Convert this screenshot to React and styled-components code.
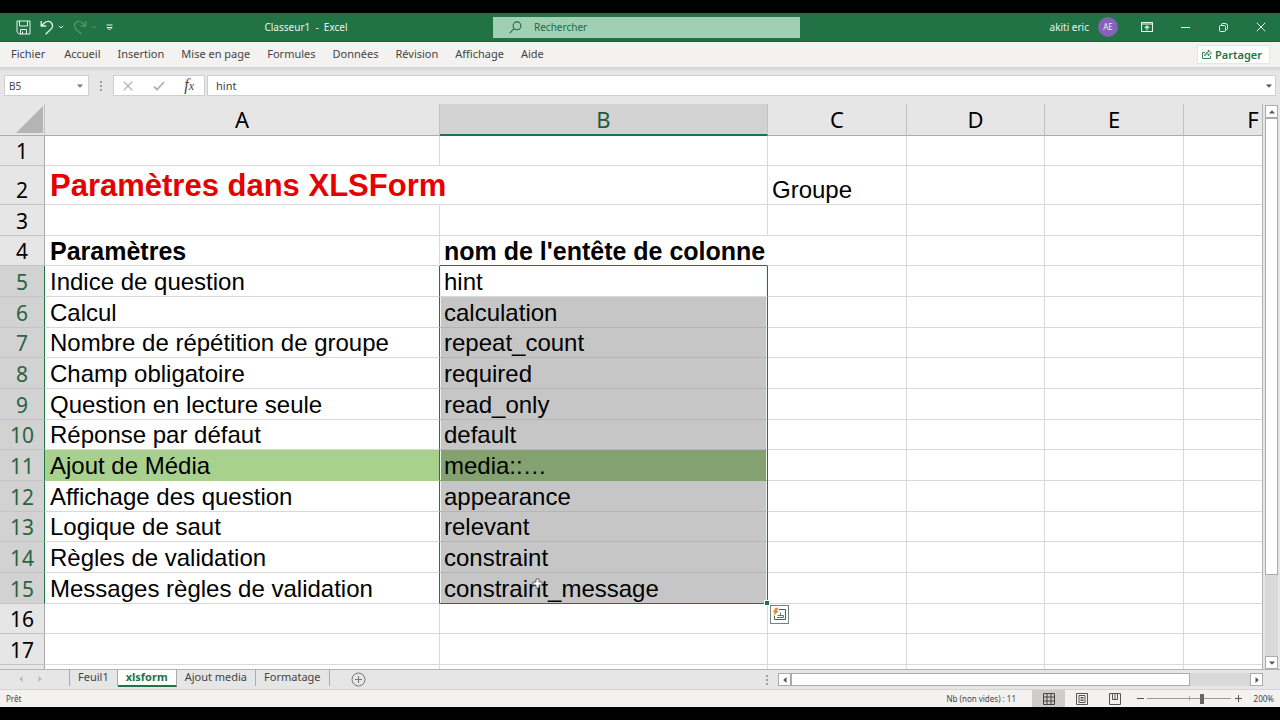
import React, {useState} from 'react';
import styled, {createGlobalStyle, css} from 'styled-components';

const GlobalStyle = createGlobalStyle`
  * {
    box-sizing: border-box;
  }
  body {
    margin: 0;
    background: #000;
    font-family: "Noto Sans", "Open Sans", sans-serif;
    font-size: 11px;
    color: #444;
  }
  button, input {
    font: inherit;
    color: inherit;
    margin: 0;
    padding: 0;
    border: 0;
    background: none;
    outline: none;
  }
  svg {
    display: block;
  }
`;

const Window = styled.div`
  display: flex;
  flex-direction: column;
  height: 100vh;
  padding: 13px 0;
  background: #000;
`;

/* title bar */

const TitleBar = styled.header`
  display: grid;
  grid-template-columns: 493fr 307fr 480fr;
  align-items: center;
  height: 29px;
  flex: none;
  background: #217346;
  border-bottom: 1px solid #1b5e39;
  color: #e8f5ec;
`;

const TitleLeft = styled.div`
  display: flex;
  align-items: center;
  padding-left: 16px;
`;

const QuickAccess = styled.div`
  display: flex;
  align-items: center;
  gap: 9px;
`;

const QuickButton = styled.button`
  display: flex;
  align-items: center;
  gap: 4px;
  opacity: ${({$faded}) => $faded ? 0.25 : 1};
`;

const DocTitle = styled.div`
  flex: 1;
  text-align: center;
  white-space: pre;
  font-size: 10px;
  padding-left: 6px;
`;

const SearchBox = styled.label`
  display: flex;
  align-items: center;
  height: 21px;
  padding-left: 16px;
  gap: 12px;
  background: #a0d0b3;
  color: #1e6b40;

  input {
    flex: 1;
    min-width: 0;
    font-size: 10px;
  }
  input::placeholder {
    color: #1e6b40;
    opacity: 1;
  }
`;

const TitleRight = styled.div`
  display: flex;
  align-items: center;
  justify-content: flex-end;
`;

const UserName = styled.span`
  font-size: 10px;
`;

const Avatar = styled.span`
  width: 20px;
  height: 20px;
  margin: 0 10px 0 9px;
  border-radius: 50%;
  background: #8661b8;
  font-size: 8px;
  line-height: 20px;
  text-align: center;
`;

const WindowButton = styled.button`
  display: flex;
  justify-content: center;
  width: 38px;
`;

/* ribbon */

const Ribbon = styled.nav`
  display: flex;
  align-items: center;
  height: 25px;
  flex: none;
  padding: 0 10px 1px 3px;
  background: #f3f2f0;
`;

const RibbonTab = styled.button`
  padding: 0 9px 1px 8px;
  line-height: 20px;

  &:first-child {
    margin-right: 2px;
  }
`;

const ShareButton = styled.button`
  display: flex;
  align-items: center;
  gap: 3px;
  height: 19px;
  margin-left: auto;
  padding: 0 7px 0 4px;
  background: #fff;
  border: 1px solid #e8e6e4;
  color: #217346;
  font-weight: 600;
`;

/* formula bar */

const FormulaRow = styled.div`
  display: flex;
  align-items: center;
  height: 37px;
  flex: none;
  padding: 0 4px;
  background: linear-gradient(#d2d2d2, #e6e6e6 5px);
`;

const WhiteBox = styled.div`
  display: flex;
  align-items: center;
  height: 21px;
  background: #fff;
  border: 1px solid #cfcfcf;
`;

const NameBox = styled(WhiteBox)`
  width: 85px;
  padding: 0 4px;
  font-size: 10px;

  input {
    flex: 1;
    min-width: 0;
  }
`;

const Dots = styled.span`
  width: 2px;
  height: 10px;
  background: repeating-linear-gradient(#a0a0a0 0 2px, transparent 2px 4px);
`;

const FormulaDots = styled(Dots)`
  margin: 0 11px;
`;

const FormulaButtons = styled(WhiteBox)`
  width: 92px;
  justify-content: space-between;
  padding: 0 10px 0 9px;
  margin-right: 2px;
`;

const FxButton = styled.button`
  font: italic 16px "Liberation Serif", serif;
  line-height: 18px;

  sub {
    font-size: 12px;
    vertical-align: baseline;
  }
`;

const FormulaInput = styled(WhiteBox)`
  flex: 1;
  padding: 0 2px 0 8px;

  input {
    flex: 1;
    min-width: 0;
    font-size: 11px;
  }
`;

/* sheet */

const SheetArea = styled.main`
  display: flex;
  flex: 1;
  min-height: 0;
  background: #e6e6e6;
  border-bottom: 1px solid #b4b4b4;
`;

const GridView = styled.div`
  flex: 1;
  min-width: 0;
  overflow: hidden;
  background: #fff;
  border-right: 1px solid #b4b4b4;
`;

const Grid = styled.table`
  table-layout: fixed;
  width: 1323px;
  border-collapse: separate;
  border-spacing: 0;
`;

const ColHead = styled.th`
  height: 32px;
  padding: 0;
  background: ${({$active}) => $active ? '#d2d2d2' : '#e6e6e6'};
  border-right: 1px solid #c2c2c2;
  border-bottom: ${({$active}) => $active ? '2px solid #217346' : '1px solid #ababab'};
  color: ${({$active}) => $active ? '#1f5c3c' : '#000'};
  font-size: 22px;
  font-weight: 400;
  line-height: 29px;
`;

const Corner = styled(ColHead)`
  padding: 0 0 0 16px;
`;

const RowHead = styled.th`
  height: ${({$height}) => $height}px;
  padding: 0;
  vertical-align: bottom;
  background: ${({$active}) => $active ? '#d2d2d2' : '#e6e6e6'};
  border-right: 1px solid ${({$active}) => $active ? '#217346' : '#ababab'};
  border-bottom: 1px solid #c4c4c4;
  color: ${({$active}) => $active ? '#2b6346' : '#000'};
  font-size: 21px;
  font-weight: 400;
  line-height: 27px;
`;

const titleCell = css`
  font-size: 31px;
  font-weight: 700;
  line-height: 36px;
  color: #e60000;
`;

const Cell = styled.td`
  padding: 0 4px;
  vertical-align: bottom;
  white-space: nowrap;
  font-family: "Liberation Sans", Arial, sans-serif;
  font-size: 24px;
  line-height: 28px;
  color: #000;
  background: ${({$fill}) => $fill || '#fff'};
  border-right: 1px solid #d9d9d9;
  border-bottom: 1px solid ${({$fill}) => $fill || '#d9d9d9'};
  ${({$bold}) => $bold && css`
    font-size: 25px;
    font-weight: 700;
  `}
  ${({$title}) => $title && titleCell}
  ${({$spill}) => $spill && 'border-right-color: transparent;'}
  ${({$rangeEdge}) => $rangeEdge && 'border-right-color: #217346;'}

  &:nth-child(2) {
    padding-left: 5px;
  }
`;

// cells of the selected range, the first one keeps its own colour
const RangeCell = styled(Cell)`
  position: relative;
  z-index: ${({$last}) => $last ? 1 : 0};
  border-right-color: #217346;
  box-shadow: inset 1px 0 #eef5f0, inset -1px 0 #eef5f0;
  ${({$first, $fill}) => !$first && css`
    background: ${$fill ? '#84a26f' : '#c6c6c6'};
    border-bottom-color: ${$fill ? '#84a26f' : '#b5b5b5'};
  `}
  ${({$last}) => $last && 'border-bottom-color: #217346;'}
`;

const AboveRangeCell = styled(Cell)`
  border-bottom-color: #217346;
`;

const FillHandle = styled.span`
  position: absolute;
  right: -2px;
  bottom: -2px;
  width: 4px;
  height: 4px;
  background: #217346;
  outline: 1px solid #fff;
`;

const QuickAnalysis = styled.button`
  position: absolute;
  top: calc(100% + 2px);
  left: calc(100% + 3px);
  display: flex;
  align-items: center;
  justify-content: center;
  width: 19px;
  height: 19px;
  background: #fff;
  border: 1px solid #6f8580;
`;

const Pointer = styled.svg`
  position: absolute;
  left: 92px;
  top: 5px;
`;

/* scroll bars */

const VScroll = styled.div`
  display: flex;
  flex-direction: column;
  flex: none;
  width: 13px;
  margin: 1px 2px 0 2px;
  background: #d9d9d9;
`;

const ScrollButton = styled.button`
  display: flex;
  align-items: center;
  justify-content: center;
  flex: none;
  width: 13px;
  height: 13px;
  background: #fff;
  border: 1px solid #ababab;
`;

const ScrollTrack = styled.div`
  display: flex;
  flex-direction: ${({$vertical}) => $vertical ? 'column' : 'row'};
  flex: 1;
`;

const ScrollThumb = styled.div`
  flex: 0 0 ${({$size}) => $size}%;
  background: #fff;
  border: 1px solid #ababab;
`;

/* sheet tabs */

const TabRow = styled.div`
  display: flex;
  height: 20px;
  flex: none;
  background: #e6e6e6;
  border-bottom: 1px solid #d4d4d4;
`;

const TabArea = styled.div`
  display: flex;
  flex: 1;
  align-items: flex-start;
`;

const TabNav = styled.div`
  display: flex;
  align-items: center;
  justify-content: center;
  gap: 11px;
  width: 69px;
  height: 18px;
  padding-right: 9px;
`;

const SheetTab = styled.button`
  height: 16px;
  padding: 0 8px 2px;
  line-height: 14px;
  border-right: 1px solid #ababab;

  &:first-of-type {
    border-left: 1px solid #ababab;
  }
  ${({$active}) => $active && css`
    height: 17px;
    background: #fff;
    border-bottom: 2px solid #217346;
    color: #217346;
    font-weight: 700;
  `}
`;

const AddSheet = styled.button`
  margin: 2px auto 0 21px;
`;

const TabDots = styled(Dots)`
  margin-top: 5px;
`;

const HScroll = styled.div`
  display: flex;
  flex: 0 0 40%;
  height: 13px;
  margin-top: 3px;
  padding: 0 17px 0 10px;

  ${ScrollTrack} {
    background: #d9d9d9;
  }
`;

/* status bar */

const StatusBar = styled.footer`
  display: flex;
  align-items: center;
  height: 17px;
  flex: none;
  padding: 0 6px;
  background: #f3f2f0;
  font-size: 8px;
`;

const Count = styled.span`
  margin: 0 16px 0 auto;
`;

const ViewButton = styled.button`
  display: flex;
  align-items: center;
  justify-content: center;
  width: 33px;
  height: 17px;
  background: ${({$active}) => $active ? '#cfcdcb' : 'transparent'};
`;

const ZoomGroup = styled.div`
  display: flex;
  align-items: center;
  margin-left: 5px;
`;

const ZoomButton = styled.button`
  display: flex;
  align-items: center;
  justify-content: center;
  width: 8px;
  height: 17px;
`;

const ZoomRange = styled.input`
  appearance: none;
  width: 84px;
  height: 11px;
  margin: 0 3px;
  background:
    linear-gradient(#9a9a9a, #9a9a9a) center / 100% 1px no-repeat,
    linear-gradient(#b0b0b0, #b0b0b0) center / 1px 5px no-repeat;

  &::-webkit-slider-thumb {
    appearance: none;
    width: 4px;
    height: 10px;
    background: #666;
  }
`;

const ZoomValue = styled.span`
  width: 32px;
  text-align: right;
`;

const menus = ['Fichier', 'Accueil', 'Insertion', 'Mise en page', 'Formules', 'Données', 'Révision', 'Affichage', 'Aide'];

const columns = [
  {name: 'A', width: 395},
  {name: 'B', width: 328},
  {name: 'C', width: 139},
  {name: 'D', width: 138},
  {name: 'E', width: 139},
  {name: 'F', width: 139},
];

const rows = [
  {height: 30},
  {height: 39, a: 'Paramètres dans XLSForm', c: 'Groupe', title: true},
  {height: 31},
  {height: 30, a: 'Paramètres', b: "nom de l'entête de colonne", bold: true},
  {height: 31, a: 'Indice de question', b: 'hint'},
  {height: 31, a: 'Calcul', b: 'calculation'},
  {height: 30, a: 'Nombre de répétition de groupe', b: 'repeat_count'},
  {height: 31, a: 'Champ obligatoire', b: 'required'},
  {height: 31, a: 'Question en lecture seule', b: 'read_only'},
  {height: 30, a: 'Réponse par défaut', b: 'default'},
  {height: 31, a: 'Ajout de Média', b: 'media::…', fill: '#a9d18e'},
  {height: 31, a: 'Affichage des question', b: 'appearance'},
  {height: 30, a: 'Logique de saut', b: 'relevant'},
  {height: 31, a: 'Règles de validation', b: 'constraint'},
  {height: 31, a: 'Messages règles de validation', b: 'constraint_message'},
  {height: 30},
  {height: 31},
];

const sheets = ['Feuil1', 'xlsform', 'Ajout media', 'Formatage'];

const FIRST = 5;
const LAST = 15;

const Chevron = () => (
  <svg width="6" height="4" viewBox="0 0 6 4" fill="none" stroke="currentColor">
    <path d="M.8.8 3 3 5.2.8"/>
  </svg>
);

const arrows = {
  up: 'M1 5.5 4 2.2l3 3.3z',
  down: 'M1 2.5 4 5.8l3-3.3z',
  left: 'M5.5 1 2.2 4l3.3 3z',
  right: 'M2.5 1 5.8 4 2.5 7z',
};

const Arrow = ({dir, color = '#555'}) => (
  <svg width="8" height="8" viewBox="0 0 8 8" fill={color}>
    <path d={arrows[dir]}/>
  </svg>
);

const SaveIcon = () => (
  <svg width="15" height="15" viewBox="0 0 15 15" fill="none" stroke="currentColor">
    <path d="M1 1h13v13H3L1 12zM3.5 1v5h8V1M4.5 14V9.5h6V14M6.5 14v-2.5"/>
  </svg>
);

const UndoIcon = ({flip}) => (
  <svg width="14" height="15" viewBox="0 0 14 15" fill="none" stroke="currentColor" strokeWidth="1.3">
    <path
      transform={flip ? 'translate(14 0) scale(-1 1)' : undefined}
      d="M1.2 1v5h5M1.4 5.8 4.6 2.8C7 .8 10 1 11.5 3c1.5 2 1.2 4.3-.4 6L5.6 14.2"
    />
  </svg>
);

const CustomizeIcon = () => (
  <svg width="7" height="7" viewBox="0 0 7 7" fill="none" stroke="currentColor">
    <path d="M.5 1h6M1 3.5h5L3.500 6z"/>
  </svg>
);

const SearchIcon = () => (
  <svg width="13" height="13" viewBox="0 0 13 13" fill="none" stroke="currentColor" strokeWidth="1.1">
    <circle cx="8" cy="4.8" r="3.9"/>
    <path d="M5.2 7.6.7 12.2"/>
  </svg>
);

const RibbonIcon = () => (
  <svg width="12" height="10" viewBox="0 0 12 10" fill="none" stroke="currentColor">
    <path d="M.5.5h11v9H.5zM.5 2h11M6 8.500v-4.500M3.800 6 6 3.900 8.200 6" strokeWidth="1.1"/>
  </svg>
);

const MinimizeIcon = () => (
  <svg width="9" height="9" viewBox="0 0 9 9" stroke="currentColor">
    <path d="M0 4.500h9"/>
  </svg>
);

const RestoreIcon = () => (
  <svg width="9" height="9" viewBox="0 0 9 9" fill="none" stroke="currentColor">
    <rect x=".5" y="2.5" width="6" height="6" rx="1"/>
    <path d="M2.500 2.200V1.500a1 1 0 0 1 1-1h3a2 2 0 0 1 2 2v3a1 1 0 0 1-1 1h-.7"/>
  </svg>
);

const CloseIcon = () => (
  <svg width="10" height="10" viewBox="0 0 10 10" stroke="currentColor">
    <path d="M.7.7l8.600 8.600M9.300.7.7 9.300"/>
  </svg>
);

const ShareIcon = () => (
  <svg width="10" height="10" viewBox="0 0 10 10" fill="none" stroke="currentColor" strokeWidth=".9">
    <path d="M3 3.500H.5v6h8V7"/>
    <path d="M2.700 6.800C3 4.500 4.300 3.300 6.300 3.200V1L9.500 4 6.300 6.800V4.800C4.700 4.800 3.600 5.500 2.700 6.800z"/>
  </svg>
);

const CancelIcon = () => (
  <svg width="10" height="10" viewBox="0 0 10 10" stroke="#b4b4b4" strokeWidth="1.3">
    <path d="M.8.8l8.400 8.400M9.200.8.8 9.200"/>
  </svg>
);

const CheckIcon = () => (
  <svg width="12" height="10" viewBox="0 0 12 10" fill="none" stroke="#b4b4b4" strokeWidth="1.8">
    <path d="M1 5.500 4 8.600 11 1"/>
  </svg>
);

const AnalysisIcon = () => (
  <svg width="15" height="15" viewBox="0 0 15 15" fill="none">
    <path d="M7 2.500h6.500v10h-11V9" stroke="#4f5f5c"/>
    <path d="M5 10.500h6.500V8.500h-6M8.500 8V5.500" stroke="#5f7a74"/>
    <path d="M3.500.8h3L4.800 4h2L1.500 9l1.300-3.600H.8z" fill="#e48a35"/>
  </svg>
);

const AddIcon = () => (
  <svg width="15" height="15" viewBox="0 0 15 15" fill="none" stroke="#777">
    <circle cx="7.5" cy="7.5" r="6.5"/>
    <path d="M4 7.500h7M7.500 4v7"/>
  </svg>
);

const NormalIcon = () => (
  <svg width="12" height="12" viewBox="0 0 12 12" fill="none" stroke="#444">
    <path d="M.5.5h11v11H.5zM4 .5v11M8 .5v11M.5 4h11M.5 8h11"/>
  </svg>
);

const LayoutIcon = () => (
  <svg width="12" height="12" viewBox="0 0 12 12" fill="none" stroke="#555">
    <path d="M.5.5h11v11H.5zM3 2.500h6v7H3zM4.500 4.500h3M4.500 6h3M4.500 7.500h3"/>
  </svg>
);

const BreakIcon = () => (
  <svg width="12" height="12" viewBox="0 0 12 12" fill="none" stroke="#555">
    <path d="M.5.500h11v11H.5zM3.500.500v6h5v-6M6 .5v6"/>
  </svg>
);

const TitleSection = () => (
  <TitleBar>
    <TitleLeft>
      <QuickAccess>
        <QuickButton aria-label="Enregistrer"><SaveIcon/></QuickButton>
        <QuickButton aria-label="Annuler"><UndoIcon/><Chevron/></QuickButton>
        <QuickButton aria-label="Rétablir" $faded><UndoIcon flip/><Chevron/></QuickButton>
        <QuickButton aria-label="Personnaliser"><CustomizeIcon/></QuickButton>
      </QuickAccess>
      <DocTitle>{'Classeur1  -  Excel'}</DocTitle>
    </TitleLeft>
    <SearchBox>
      <SearchIcon/>
      <input type="text" placeholder="Rechercher" aria-label="Rechercher"/>
    </SearchBox>
    <TitleRight>
      <UserName>akiti eric</UserName>
      <Avatar>AE</Avatar>
      <WindowButton aria-label="Ruban"><RibbonIcon/></WindowButton>
      <WindowButton aria-label="Réduire"><MinimizeIcon/></WindowButton>
      <WindowButton aria-label="Restaurer"><RestoreIcon/></WindowButton>
      <WindowButton aria-label="Fermer"><CloseIcon/></WindowButton>
    </TitleRight>
  </TitleBar>
);

const FormulaBar = () => (
  <FormulaRow>
    <NameBox>
      <input type="text" defaultValue="B5" aria-label="Zone Nom"/>
      <button aria-label="Noms"><Arrow dir="down" color="#777"/></button>
    </NameBox>
    <FormulaDots/>
    <FormulaButtons>
      <button aria-label="Annuler la saisie"><CancelIcon/></button>
      <button aria-label="Valider"><CheckIcon/></button>
      <FxButton>f<sub>x</sub></FxButton>
    </FormulaButtons>
    <FormulaInput>
      <input type="text" defaultValue="hint" aria-label="Barre de formule"/>
      <button aria-label="Développer"><Arrow dir="down"/></button>
    </FormulaInput>
  </FormulaRow>
);

const CellB = ({row, number}) => {
  if (number === FIRST - 1) {
    return <AboveRangeCell $bold $spill>{row.b}</AboveRangeCell>;
  }
  if (number < FIRST || number > LAST) {
    return <Cell>{row.b}</Cell>;
  }
  const last = number === LAST;

  return (
    <RangeCell $fill={row.fill} $first={number === FIRST} $last={last}>
      {row.b}
      {last && (
        <>
          <Pointer width="11" height="11" viewBox="0 0 11 11">
            <path d="M4 1h3v3h3v3H7v3H4V7H1V4h3z" fill="#fff" stroke="#333" strokeWidth=".7"/>
          </Pointer>
          <FillHandle/>
          <QuickAnalysis aria-label="Analyse rapide"><AnalysisIcon/></QuickAnalysis>
        </>
      )}
    </RangeCell>
  );
};

const Row = ({row, number}) => {
  const inRange = number >= FIRST && number <= LAST;

  return (
    <tr>
      <RowHead scope="row" $height={row.height} $active={inRange}>{number}</RowHead>
      <Cell $fill={row.fill} $bold={row.bold} $title={row.title} $spill={row.title} $rangeEdge={inRange}>
        {row.a}
      </Cell>
      <CellB row={row} number={number}/>
      <Cell>{row.c}</Cell>
      <Cell/>
      <Cell/>
      <Cell/>
    </tr>
  );
};

const Sheet = () => (
  <SheetArea>
    <GridView>
      <Grid>
        <colgroup>
          <col width="45"/>
          {columns.map(({name, width}) => <col key={name} width={width}/>)}
        </colgroup>
        <thead>
          <tr>
            <Corner as="td">
              <svg width="27" height="27" viewBox="0 0 27 27"><path d="M27 0v27H0z" fill="#b4b4b4"/></svg>
            </Corner>
            {columns.map(({name}) => (
              <ColHead key={name} scope="col" $active={name === 'B'}>{name}</ColHead>
            ))}
          </tr>
        </thead>
        <tbody>
          {rows.map((row, i) => <Row key={i} row={row} number={i + 1}/>)}
          <tr>
            <RowHead as="td" $height={31}/>
            {columns.map(({name}) => <Cell key={name}/>)}
          </tr>
        </tbody>
      </Grid>
    </GridView>
    <VScroll>
      <ScrollButton aria-label="Haut"><Arrow dir="up"/></ScrollButton>
      <ScrollTrack $vertical><ScrollThumb $size={85}/></ScrollTrack>
      <ScrollButton aria-label="Bas"><Arrow dir="down"/></ScrollButton>
    </VScroll>
  </SheetArea>
);

const SheetTabs = () => {
  const [active, setActive] = useState('xlsform');

  return (
    <TabRow>
      <TabArea>
        <TabNav>
          <Arrow dir="left" color="#b8b8b8"/>
          <Arrow dir="right" color="#b8b8b8"/>
        </TabNav>
        {sheets.map((name) => (
          <SheetTab key={name} $active={name === active} onClick={() => setActive(name)}>{name}</SheetTab>
        ))}
        <AddSheet aria-label="Nouvelle feuille"><AddIcon/></AddSheet>
        <TabDots/>
      </TabArea>
      <HScroll>
        <ScrollButton aria-label="Gauche"><Arrow dir="left"/></ScrollButton>
        <ScrollTrack><ScrollThumb $size={87}/></ScrollTrack>
        <ScrollButton aria-label="Droite"><Arrow dir="right"/></ScrollButton>
      </HScroll>
    </TabRow>
  );
};

const Status = () => (
  <StatusBar>
    <span>Prêt</span>
    <Count>Nb (non vides) : 11</Count>
    <ViewButton aria-label="Normal" $active><NormalIcon/></ViewButton>
    <ViewButton aria-label="Mise en page"><LayoutIcon/></ViewButton>
    <ViewButton aria-label="Sauts de page"><BreakIcon/></ViewButton>
    <ZoomGroup>
      <ZoomButton aria-label="Zoom arrière">
        <svg width="7" height="7" viewBox="0 0 7 7" stroke="#555"><path d="M0 3.500h7"/></svg>
      </ZoomButton>
      <ZoomRange type="range" min="0" max="100" defaultValue="66" aria-label="Zoom"/>
      <ZoomButton aria-label="Zoom avant">
        <svg width="7" height="7" viewBox="0 0 7 7" stroke="#555"><path d="M0 3.500h7M3.500 0v7"/></svg>
      </ZoomButton>
      <ZoomValue>200%</ZoomValue>
    </ZoomGroup>
  </StatusBar>
);

export default function App() {
  return (
    <>
      <GlobalStyle/>
      <Window>
        <TitleSection/>
        <Ribbon>
          {menus.map((name) => <RibbonTab key={name}>{name}</RibbonTab>)}
          <ShareButton><ShareIcon/>Partager</ShareButton>
        </Ribbon>
        <FormulaBar/>
        <Sheet/>
        <SheetTabs/>
        <Status/>
      </Window>
    </>
  );
}
